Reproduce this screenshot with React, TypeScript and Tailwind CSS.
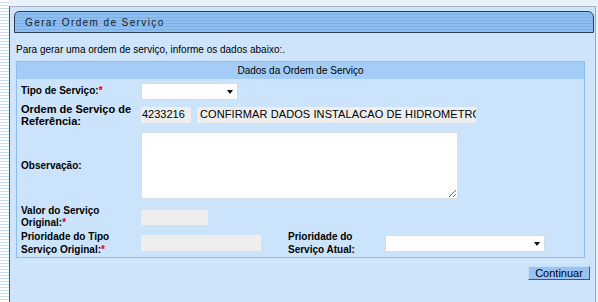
import React from "react";

function Req() {
  return <span className="text-[#e00000]">*</span>;
}

function SelectBox({ w }: { w: string }) {
  return (
    <div className={`relative h-[17px] ${w} border border-[#d4dbe3] bg-white`}>
      <svg className="absolute right-[4px] top-[6px]" width="6" height="4" viewBox="0 0 6 4">
        <path d="M0 0H6L3 4Z" fill="#111" />
      </svg>
    </div>
  );
}

export default function App() {
  return (
    <div className="flex h-[302px] w-[598px] overflow-hidden font-['Liberation_Sans',Arial,sans-serif] text-black">
      <div className="w-[9px] shrink-0 bg-[repeating-linear-gradient(180deg,#ffffff_0px,#ffffff_2px,#c9ddf1_2px,#c9ddf1_3px)]" />
      <div className="flex flex-1 flex-col bg-[#eaf3fc]">
        <div className="h-[6px] shrink-0" />
        <div className="mr-[2px] flex flex-1 flex-col border-l border-r border-t border-l-[#4d5a6c] border-r-[#9aa9ba] border-t-[#a7b4c3] bg-[#cde4fb]">
          <div className="ml-[4px] mr-[1px] mt-[4px] flex h-[22px] items-center rounded-tl-[5px] rounded-tr-[6px] border border-[#2f3d50] bg-[repeating-linear-gradient(180deg,#8fbef0_0px,#8fbef0_2px,#7cafe7_2px,#7cafe7_3px)] pl-[10px] text-[10px] tracking-[1.4px] text-[#141c28]">
            Gerar Ordem de Serviço
          </div>
          <div className="ml-[6px] mt-[11px] text-[10px] leading-[12px]">
            Para gerar uma ordem de serviço, informe os dados abaixo:.
          </div>
          <div className="ml-[6px] mt-[5px] w-[569px] border border-[#8fbdeb] bg-[#cce4fb]">
            <div className="flex h-[17px] items-center justify-center bg-[#a3cdf6] text-[10px]">
              Dados da Ordem de Serviço
            </div>
            <div className="flex h-[24px] items-center pl-[4px]">
              <div className="w-[120px] text-[10px] font-bold leading-[12px]">
                Tipo de Serviço:<Req />
              </div>
              <SelectBox w="w-[97px]" />
            </div>
            <div className="flex h-[23px] items-center pl-[4px]">
              <div className="w-[120px] text-[11px] font-bold leading-[12px]">
                Ordem de Serviço de
                <br />
                Referência:
              </div>
              <div className="flex h-[16px] w-[50px] items-center bg-[#eeeeee] pl-[1px] text-[11px]">4233216</div>
              <div className="ml-[6px] flex h-[16px] w-[279px] items-center overflow-hidden whitespace-nowrap bg-[#eeeeee] pl-[3px] text-[11px] tracking-[0.1px]">
                CONFIRMAR DADOS INSTALACAO DE HIDROMETRO
              </div>
            </div>
            <div className="flex h-[79px] items-center pl-[4px]">
              <div className="w-[120px] text-[10px] font-bold leading-[12px]">Observação:</div>
              <textarea className="h-[67px] w-[317px] resize border border-[#d6dde5] bg-white outline-none" />
            </div>
            <div className="flex h-[24px] items-center pl-[4px]">
              <div className="w-[120px] text-[10px] font-bold leading-[12px]">
                Valor do Serviço
                <br />
                Original:<Req />
              </div>
              <div className="h-[15px] w-[67px] bg-[#eeeeee]" />
            </div>
            <div className="flex h-[28px] items-center pl-[4px]">
              <div className="w-[120px] text-[10px] font-bold leading-[13px]">
                Prioridade do Tipo
                <br />
                Serviço Original:<Req />
              </div>
              <div className="h-[16px] w-[120px] bg-[#eeeeee]" />
              <div className="ml-[27px] w-[97px] text-[10px] font-bold leading-[13px]">
                Prioridade do
                <br />
                Serviço Atual:
              </div>
              <SelectBox w="w-[160px]" />
            </div>
          </div>
          <div className="mr-[5px] mt-[8px] flex justify-end">
            <button className="flex h-[14px] w-[62px] items-center justify-center border border-b-[#3e5878] border-l-[#c5def8] border-r-[#3e5878] border-t-[#c5def8] bg-[#99c3f3] text-[11px] leading-none text-black">
              Continuar
            </button>
          </div>
        </div>
      </div>
    </div>
  );
}
